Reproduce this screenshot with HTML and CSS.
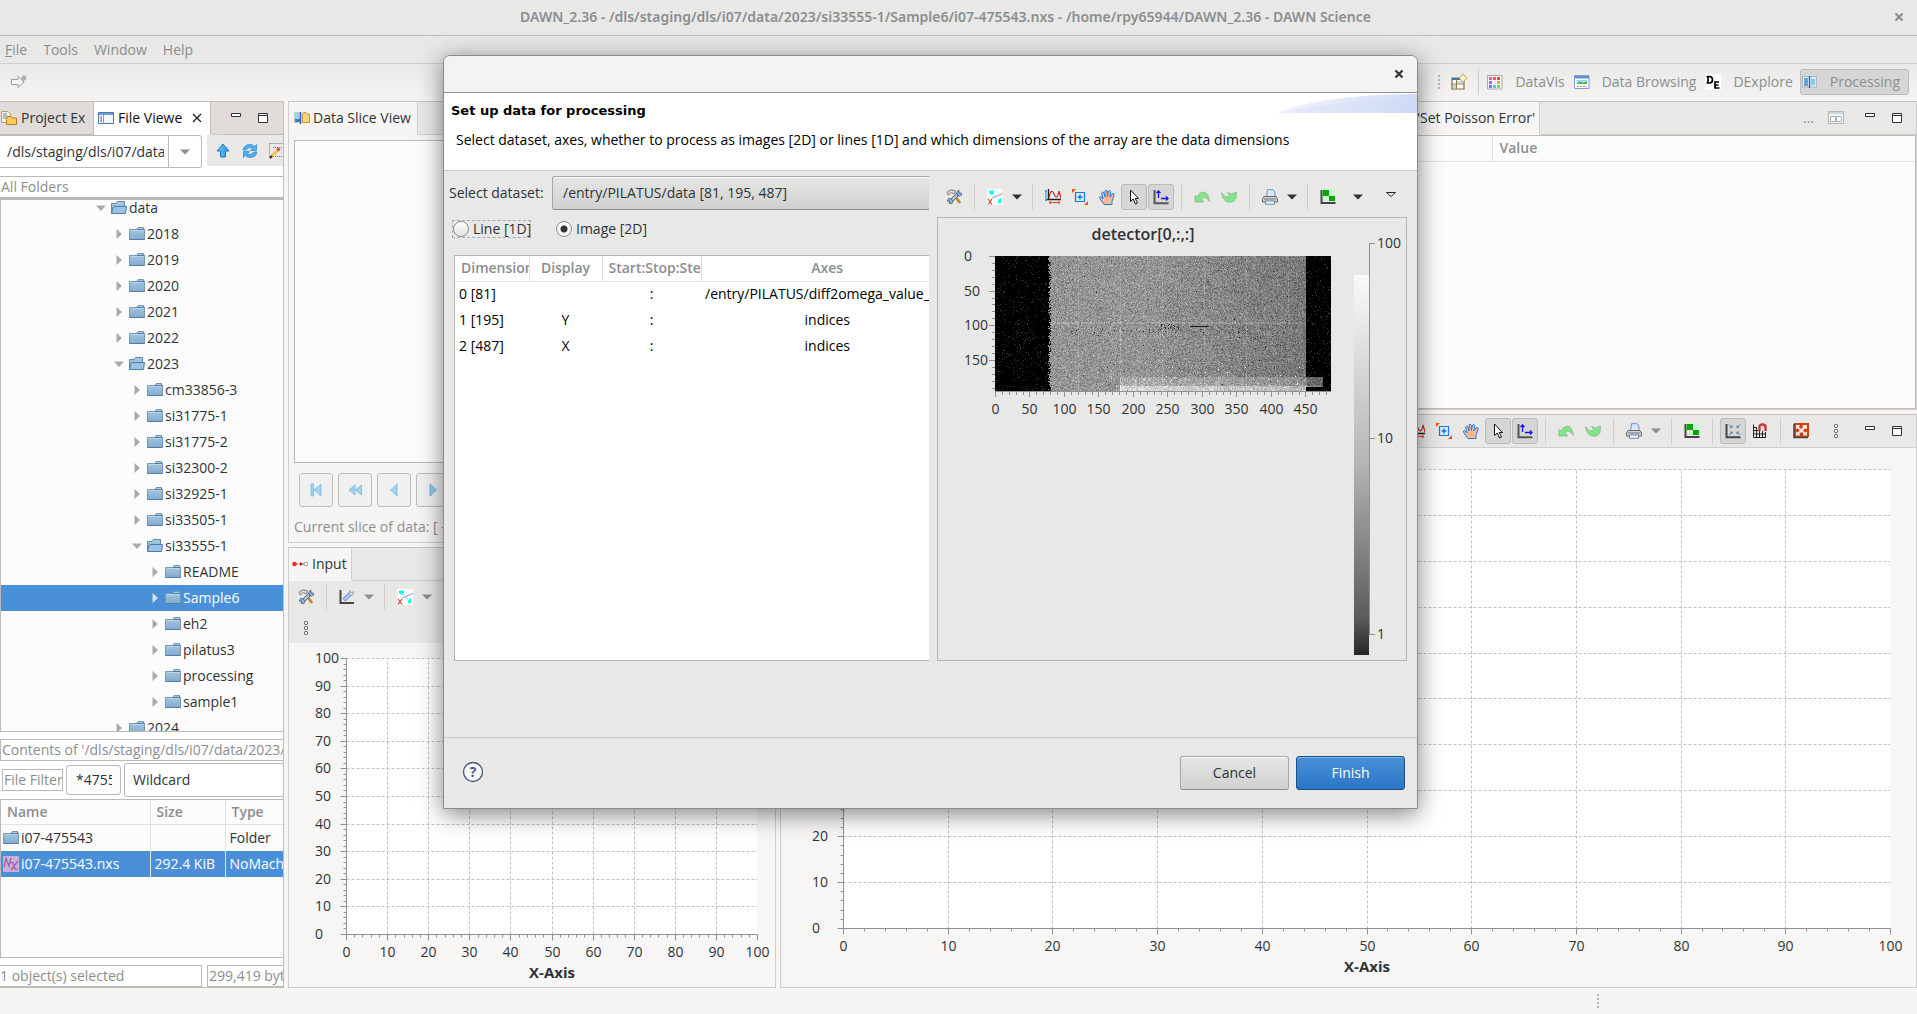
FILE: index.html
```html
<!DOCTYPE html>
<html lang="en">
<head>
<meta charset="utf-8">
<title>DAWN Science</title>
<link rel="stylesheet" href="styles.css">
</head>
<body>
<svg class="sprite" aria-hidden="true">
  <defs>
    <linearGradient id="fold" x1="0" y1="0" x2="0" y2="1"><stop offset="0" stop-color="#a9cbe2"/><stop offset="1" stop-color="#84a9cf"/></linearGradient>
    <linearGradient id="blueArrow" x1="0" y1="0" x2="1" y2="0"><stop offset="0" stop-color="#6fc0f0"/><stop offset="1" stop-color="#2d95e0"/></linearGradient>
    <linearGradient id="swoosh" x1="0" y1="0" x2="1" y2="0"><stop offset="0" stop-color="#f4f6fd"/><stop offset="1" stop-color="#cfdaf4"/></linearGradient>
    <linearGradient id="bar" x1="0" y1="0" x2="0" y2="1"><stop offset="0" stop-color="#fafafa"/><stop offset="0.5" stop-color="#b4b4b4"/><stop offset="0.9" stop-color="#5c5c5c"/><stop offset="1" stop-color="#262626"/></linearGradient>
  </defs>
  <symbol id="folder" viewBox="0 0 16 16"><path d="M.5 3.500H7.500L9 1.500H14.500V3H15.500V13.500H.5Z" fill="url(#fold)" stroke="#7399b3"/><path d="M8 3.500H15M.5 13.500H15.500" stroke="#4f7fa8"/><path d="M1.500 4.500H14.500" stroke="#c4dfee" opacity=".7"/></symbol>
  <symbol id="folder-open" viewBox="0 0 16 16"><path d="M.5 13.500V3.500H5L6.500 1.500H13.500V7" fill="url(#fold)" stroke="#5b8bab"/><path d="M2 7.500L4 6.500H15.500L14.500 13.500H.5Z" fill="#9cc3e4" stroke="#4a80a8"/></symbol>
  <symbol id="nx" viewBox="0 0 16 16"><path d="M0 0H16V16H0Z" fill="#c9b0d6"/><path d="M1 11L3 2.500L6 10L8 2M7.500 7Q10 5 11 10T14.500 13M15 5L8 14" fill="none" stroke="#a35fae" stroke-width="1.300"/></symbol>
  <symbol id="project" viewBox="0 0 16 16"><path d="M.5 1.500H7L9.500 4V12.500H.5Z" fill="#f3f0dc" stroke="#b3a26a"/><path d="M2 4H6M2 6H6M2 8H5" stroke="#5f8cc7"/><path d="M5.500 9.500V8L6.500 6.500H10L11 8H15.500V14.500H5.500Z" fill="#fbcb5c" stroke="#bd7a1c"/></symbol>
  <symbol id="viewer" viewBox="0 0 16 16"><path d="M.5 2.500H15.500V13.500H.5Z" fill="#f2f6fd" stroke="#4377b8"/><path d="M1 3H15V5H1Z" fill="#6e9ddb"/><path d="M5.500 5V13" stroke="#7c9fd0"/><path d="M3 6V12M3 8H4M3 11H4" stroke="#777"/></symbol>
  <symbol id="slice" viewBox="0 0 16 16"><path d="M.5 2.500H6V12.500H.5Z" fill="#9fd0e8" stroke="#b8cfd8"/><path d="M1 9H6V12H1Z" fill="#3f7fb0"/><path d="M6.500 2V14" stroke="#285ce0" stroke-width="1.500"/><path d="M8.500 12.500V4L9.500 2.500H12L13 4H15.500V12.500Z" fill="#fbd678" stroke="#c8922e"/></symbol>
  <symbol id="up" viewBox="0 0 16 16"><path d="M8 1L14 8H10.500V14H5.500V8H2Z" fill="url(#blueArrow)" stroke="#1d78c8"/></symbol>
  <symbol id="refresh" viewBox="0 0 16 16"><path d="M1 7Q2 1.500 8 1.500Q11 1.500 12.500 3.500L14.500 1.500V7.500H8.500L10.500 5.500Q6.500 3 4.500 7ZM15 9Q14 14.500 8 14.500Q5 14.500 3.500 12.500L1.500 14.500V8.500H7.500L5.500 10.500Q9.500 13 11.500 9Z" fill="#4eb0f0" stroke="#2a84cf" stroke-width=".7"/></symbol>
  <symbol id="edit" viewBox="0 0 16 16"><path d="M.5 .5H16M.5 .5V15M4 4.500H16M4 13.500H16" stroke="#777" fill="none" stroke-dasharray="1 1"/><path d="M2 14L10 6" stroke="#e9c64b" stroke-width="3"/><path d="M8.500 7.500L10.500 5.500" stroke="#d44" stroke-width="3"/><path d="M1 15L3 13" stroke="#222" stroke-width="2"/></symbol>
  <symbol id="tools" viewBox="0 0 16 16"><path d="M3 14L11 5" stroke="#e8a33a" stroke-width="3"/><path d="M9 7L14 14" stroke="#c98a2c" stroke-width="3"/><path d="M1 3L5 .7L10 2L8 5L5.500 3.500L2 6Z" fill="#d3d4d2" stroke="#888"/><path d="M4.500 12.500L12 5" stroke="#49719f" stroke-width="3.600"/><path d="M4.500 12.500L12 5" stroke="#b8cfe8" stroke-width="1.800"/><path d="M11 6.500V3L13 1V4H15.500V6L13.500 7ZM5.500 10L2.500 9.500L1 12H3.500V14.500L6 14.500L7 12Z" fill="#8fb2dc" stroke="#44618c" stroke-width=".8"/></symbol>
  <symbol id="axis-wrench" viewBox="0 0 16 16"><path d="M1.500 1V14H15" fill="none" stroke="#444" stroke-width="2"/><path d="M5 11L11 5" stroke="#6f93dc" stroke-width="4"/><path d="M5.500 10.500L11 5" stroke="#bad0fa" stroke-width="2"/><path d="M10 5L11 1.500L12.500 4L14.500 2.500V5.500L12 7Z" fill="#ddd" stroke="#888" stroke-width=".7"/></symbol>
  <symbol id="trace" viewBox="0 0 16 16"><path d="M0 0H16V16H0Z" fill="#fff"/><path d="M3 3L14 13" fill="none" stroke="#7be9ee"/><path d="M5 9L16 4.500" stroke="#9b92dd"/><path d="M2 2L3 1.500H7V4L5 6L2 4ZM11 12L13 9.500L14.500 9V14H11Z" fill="#1ff4f6"/><path d="M1 10L5 15.500M5 10L1 15.500" stroke="#d63a2a" stroke-width="1.200"/></symbol>
  <symbol id="peaks" viewBox="0 0 16 16"><path d="M3 1H15V10H3Z" fill="#d8f4f4"/><path d="M3.500 0V11M2 10.500H16" stroke="#222" stroke-width="1.300"/><path d="M4 9Q6-2 9 5T14 2L16 9" fill="none" stroke="#e02010" stroke-width="1.200"/><path d="M1 1V12M0 2H2M0 11H2" stroke="#2080e0"/><path d="M4 13.500H15M6 12L4 13.500L6 15M13 12L15 13.500L13 15" fill="none" stroke="#e85018"/></symbol>
  <symbol id="zoombox" viewBox="0 0 16 16"><path d="M3.500 3.500H12.500V12.500H3.500Z" fill="#d7ebff" stroke="#1877e0" stroke-width="1.200"/><path d="M8 5.500V10.500M5.500 8H10.500" stroke="#1877e0" stroke-width="1.400"/><path d="M0 0H4L0 4ZM16 16H12L16 12Z" fill="#f25012"/></symbol>
  <symbol id="hand" viewBox="0 0 16 16"><path d="M5 15.500L1 10Q-.5 7.500 1.500 7.500L4 10L2.500 4Q3.500 2 5 4L6 8V2Q7 0 8.300 2V7.500L9.500 2Q11 .5 11.700 2.500L11 8L13.500 4.500Q15.500 4 15 6.500L13 12.500V15.500Z" fill="#fcb98f" stroke="#1c7ce8"/></symbol>
  <symbol id="cursor" viewBox="0 0 16 16"><path d="M4.500 1V12.500L7.200 10L9.500 15L11.500 14L9.200 9.500H12.500Z" fill="#fff" stroke="#111"/></symbol>
  <symbol id="axes" viewBox="0 0 16 16"><path d="M1.500 1V14.200H15.500" fill="none" stroke="#555" stroke-width="2"/><path d="M5.500 9V2M3.500 4L5.500 2L7.500 4M8 9.500H15M13 7.500L15 9.500L13 11.500" fill="none" stroke="#1414e8" stroke-width="1.300"/></symbol>
  <symbol id="undo" viewBox="0 0 16 16"><path d="M1 6.500L3 8Q5.500 3 9.500 3Q14.500 4 15.500 12.500Q13 8 9 8L7.500 9.500L9.500 13H1Z" fill="#84e584" stroke="#86b893" stroke-width=".8"/></symbol>
  <symbol id="redo" viewBox="0 0 16 16"><path d="M15 9.500L12.500 12.500Q10 13.500 6.500 13Q1.500 11 .5 3.500Q3 8 7 8L8.500 6.500L6.500 3.500L10.500 5L15.500 3Z" fill="#84e584" stroke="#86b893" stroke-width=".8"/></symbol>
  <symbol id="print" viewBox="0 0 16 16"><path d="M4.500 8L5.500 .7H11L13 3V8Z" fill="#d8e9fc" stroke="#6b92c4"/><path d="M2 7.500H14L15.500 10V13H.5V10Z" fill="#d5d5d3" stroke="#666"/><path d="M2 10H14" stroke="#777"/><path d="M3.500 12H12.500V15.200H3.500Z" fill="#fff" stroke="#5c85bb"/></symbol>
  <symbol id="checker" viewBox="0 0 16 16"><path d="M2 0H15V12H2Z" fill="#c9f7cd"/><path d="M3 1H9V7H3ZM9 7H15V12H9Z" fill="#07a307"/><path d="M1.500 1V14H15.500" fill="none" stroke="#444" stroke-width="2"/></symbol>
  <symbol id="rescale" viewBox="0 0 16 16"><path d="M1.500 1V14.200H15.500" fill="none" stroke="#444" stroke-width="2"/><path d="M4 1.500L7 4.500V2.500M7 4.500H5M15 1.500L12 4.500V2.500M12 4.500H14M4 12L7 9V11M7 9H5M15 12L12 9V11M12 9H14" fill="none" stroke="#4673a8" stroke-width=".9"/></symbol>
  <symbol id="snap" viewBox="0 0 16 16"><path d="M1.500 1.500V14.500H14M4.500 4V15M7.500 7V15M10.500 8V15M13.500 9V15M1 4.500H5M1 7.500H7M1 11H14" fill="none" stroke="#222"/><path d="M7.500 8V4Q7.500 1.500 10.500 1.500T13.500 4V8" fill="none" stroke="#c33a3a" stroke-width="2.400"/></symbol>
  <symbol id="expand" viewBox="0 0 16 16"><path d="M1 0H16V14H1Z" fill="#cc4310"/><path d="M3 2H7L6 4L8 6L10 4L9.500 2H14V6L12 5.500L10 7.500L12 9.500L14 8.500V12.500H10L10.500 10.500L8.500 9L6.500 10.500L7 12.500H3V8.500L5 9.500L6.500 7.500L5 5.500L3 6Z" fill="#fbe3d8"/><path d="M1 1V14.500H15" fill="none" stroke="#444" stroke-width="1.500"/></symbol>
  <symbol id="dots" viewBox="0 0 16 16"><g fill="#fff" stroke="#666"><circle cx="8" cy="3" r="1.700"/><circle cx="8" cy="8" r="1.700"/><circle cx="8" cy="13" r="1.700"/></g></symbol>
  <symbol id="min" viewBox="0 0 16 16"><path d="M3.500 3.500H12.500V6.500H3.500Z" fill="#fff" stroke="#2e3436"/></symbol>
  <symbol id="max" viewBox="0 0 16 16"><path d="M3.500 3.500H12.500V12.500H3.500ZM3.500 5.500H12.500" fill="#fff" stroke="#2e3436"/></symbol>
  <symbol id="close" viewBox="0 0 16 16"><path d="M4 4L12 12M12 4L4 12" stroke="#222" stroke-width="1.300"/></symbol>
  <symbol id="close-bold" viewBox="0 0 16 16"><path d="M4.500 4.500L11.500 11.500M11.500 4.500L4.500 11.500" stroke="currentColor" stroke-width="2.200"/></symbol>
  <symbol id="input-view" viewBox="0 0 16 16"><path d="M4 8H13" stroke="#a44" stroke-dasharray="2 1"/><circle cx="2.500" cy="8" r="2.300" fill="#d8342c"/><path d="M8 6L11 8L8 10Z" fill="#b22"/><circle cx="14" cy="8" r="1.800" fill="#fff" stroke="#999"/></symbol>
  <symbol id="new" viewBox="0 0 16 16"><path d="M.5 5.500H7V2.500L13 8L7 13.500V10.500H.5Z" fill="#f6f6f5" stroke="#9a9a98"/><path d="M13 1V7M10 4H16M11 2L15 6M15 2L11 6" stroke="#999" stroke-width=".9"/></symbol>
  <symbol id="persp" viewBox="0 0 16 16"><path d="M1 4H13V15H1Z" fill="#fff" stroke="#8a6b3a" stroke-width="1.200"/><path d="M1 4H9V6H1Z" fill="#3e76b5"/><path d="M5.500 6V15M1 10H13" stroke="#8a7a4a"/><path d="M2 11H5V14H2ZM6 7H12V9H6Z" fill="#b9d8ee"/><path d="M12 0L16 4L12 8L8 4Z" fill="#fff4cc" stroke="#caa040"/></symbol>
  <symbol id="datavis" viewBox="0 0 16 16"><path d="M.5 1.500H15V15H.5Z" fill="#fafafa" stroke="#aaa"/><path d="M2 3H5V6H2Z" fill="#ee58b0"/><path d="M6 3H9V6H6Z" fill="#ee5a52"/><path d="M10 3H13V6H10Z" fill="#e8453a"/><path d="M2 7H5V10H2Z" fill="#b165e8"/><path d="M10 7H13V10H10Z" fill="#f5a638"/><path d="M2 11H5V14H2Z" fill="#6c7cf0"/><path d="M6 11H9V14H6Z" fill="#4fc8ee"/><path d="M10 11H13V14H10Z" fill="#6ddb54"/></symbol>
  <symbol id="browse" viewBox="0 0 16 16"><path d="M.5 1.500H15V14.500H.5Z" fill="#fafcff" stroke="#7e9fca"/><path d="M1 2H15V4.500H1Z" fill="#5c93d6"/><path d="M2.500 6H13V10H2.500Z" fill="#9fd4f0"/><path d="M2.500 10L6 7.500L9 9L13 7.500V10Z" fill="#48b83a"/><path d="M3 12.500H13" stroke="#d98a4a" stroke-dasharray="2 1"/></symbol>
  <symbol id="dexp" viewBox="0 0 16 16"><path d="M0 0H16V16H0Z" fill="#fff"/><path d="M3 2.500V9H4.500Q7.500 9 7.500 5.800T4.500 2.500H1.500M1.500 9H4M14 8H10V14H14.500M10 11H13.500" fill="none" stroke="#000" stroke-width="1.700"/></symbol>
  <symbol id="proc" viewBox="0 0 16 16"><path d="M.5 2.500H14.500V13H.5Z" fill="#d3edfa" stroke="#a8b8c4"/><path d="M2 4H6V12H2Z" fill="#65a5cf"/><path d="M9 5H13V11H9Z" fill="#8fc4e8"/><path d="M7.500 2V14" stroke="#2b5bc0" stroke-width="1.300"/></symbol>
  <symbol id="pane" viewBox="0 0 16 16"><path d="M.5 1.500H15.500V13.500H.5Z" fill="#f3f3f3" stroke="#b5b5b5"/><path d="M1 2H15V4H1Z" fill="#d5d5d5"/><path d="M2.500 6.500H7.500V11.500H2.500Z" fill="#fff" stroke="#aaa"/><path d="M8.500 6.500H13.500V11.500H8.500Z" fill="#fff" stroke="#8fc0e0"/></symbol>
  <symbol id="first" viewBox="0 0 16 16"><path d="M3 2H5.500V14H3ZM13 2V14L6 8Z" fill="#9ed4f3" stroke="#7fb5da" stroke-width=".8"/></symbol>
  <symbol id="back" viewBox="0 0 16 16"><path d="M8 3V13L2 8ZM14.500 3V13L8.500 8Z" fill="#9ed4f3" stroke="#7fb5da" stroke-width=".8"/></symbol>
  <symbol id="prev" viewBox="0 0 16 16"><path d="M11 2V14L4.500 8Z" fill="#9ed4f3" stroke="#7fb5da" stroke-width=".8"/></symbol>
  <symbol id="next" viewBox="0 0 16 16"><path d="M5 2V14L11.500 8Z" fill="#8bc8f0" stroke="#6aa8d4" stroke-width=".8"/></symbol>
  <symbol id="caret" viewBox="0 0 16 16"><path d="M3 5.500H13L8 10.500Z" fill="currentColor"/></symbol>
  <symbol id="caret-open" viewBox="0 0 16 16"><path d="M3.500 3.500H12.500L8 7.500Z" fill="#fff" stroke="#222"/></symbol>
  <symbol id="tri" viewBox="0 0 16 16"><path d="M5.500 3L11 8L5.500 13Z" fill="currentColor"/></symbol>
</svg>

<div class="app">
  <header class="titlebar"><h1>DAWN_2.36 - /dls/staging/dls/i07/data/2023/si33555-1/Sample6/i07-475543.nxs - /home/rpy65944/DAWN_2.36 - DAWN Science</h1>
    <button class="plain win-close" aria-label="Close window"><svg class="ic"><use href="#close-bold"/></svg></button></header>
  <nav class="menubar"><a href="#"><u>F</u>ile</a><a href="#">Tools</a><a href="#">Window</a><a href="#">Help</a></nav>
  <div class="coolbar">
    <button class="tool" aria-label="New"><svg class="ic"><use href="#new"/></svg></button>
    <div class="perspectives">
      <span class="grip"></span>
      <button class="tool" aria-label="Open perspective"><svg class="ic"><use href="#persp"/></svg></button>
      <span class="sep"></span>
      <button class="persp"><svg class="ic"><use href="#datavis"/></svg>DataVis</button>
      <button class="persp"><svg class="ic"><use href="#browse"/></svg>Data Browsing</button>
      <button class="persp"><svg class="ic"><use href="#dexp"/></svg>DExplore</button>
      <button class="persp on"><svg class="ic"><use href="#proc"/></svg>Processing</button>
    </div>
  </div>

  <main class="workbench">
    <section class="part files">
      <div class="tabs warm">
        <button class="tab"><svg class="ic"><use href="#project"/></svg>Project Ex</button>
        <button class="tab active"><svg class="ic"><use href="#viewer"/></svg>File Viewe<svg class="ic x"><use href="#close"/></svg></button>
        <span class="winbtns"><button class="tool" aria-label="Minimize"><svg class="ic"><use href="#min"/></svg></button><button class="tool" aria-label="Maximize"><svg class="ic"><use href="#max"/></svg></button></span>
      </div>
      <div class="pathrow">
        <div class="combo"><input type="text" aria-label="Path" value="/dls/staging/dls/i07/data"><button class="plain" aria-label="Show paths"><svg class="ic"><use href="#caret"/></svg></button></div>
        <div class="pathtools"><button class="tool" aria-label="Up"><svg class="ic"><use href="#up"/></svg></button><button class="tool" aria-label="Refresh"><svg class="ic"><use href="#refresh"/></svg></button><button class="tool" aria-label="Edit"><svg class="ic"><use href="#edit"/></svg></button></div>
      </div>
      <div class="boxlabel folders">All Folders</div>
      <ul class="tree" id="tree"></ul>
      <div class="boxlabel contents">Contents of '/dls/staging/dls/i07/data/2023/si</div>
      <div class="filters">
        <label class="boxlabel" for="filter">File Filter</label>
        <input id="filter" type="text" value="*475543*">
        <select aria-label="Filter type"><option>Wildcard</option></select>
      </div>
      <div class="filelist">
        <table>
          <thead><tr><th class="c-name">Name</th><th class="c-size">Size</th><th class="c-type">Type</th></tr></thead>
          <tbody>
            <tr><td><span class="cell"><svg class="ic"><use href="#folder"/></svg>i07-475543</span></td><td></td><td>Folder</td></tr>
            <tr class="sel"><td><span class="cell"><svg class="ic"><use href="#nx"/></svg>i07-475543.nxs</span></td><td>292.4 KiB</td><td>NoMach</td></tr>
          </tbody>
        </table>
      </div>
      <div class="counts"><div class="boxlabel">1 object(s) selected</div><div class="boxlabel">299,419 byt</div></div>
    </section>

    <div class="stack middle">
      <section class="part slice">
        <div class="tabs"><button class="tab active"><svg class="ic"><use href="#slice"/></svg>Data Slice View</button></div>
        <div class="slicebox"></div>
        <div class="nav">
          <button aria-label="First"><svg class="ic"><use href="#first"/></svg></button>
          <button aria-label="Back"><svg class="ic"><use href="#back"/></svg></button>
          <button aria-label="Previous"><svg class="ic"><use href="#prev"/></svg></button>
          <button aria-label="Next"><svg class="ic"><use href="#next"/></svg></button>
        </div>
        <p class="current">Current slice of data: [ - ]</p>
      </section>
      <section class="part input">
        <div class="tabs"><button class="tab active"><svg class="ic"><use href="#input-view"/></svg>Input</button></div>
        <div class="toolbars dim">
          <div class="bar">
            <button class="tool" aria-label="Tools"><svg class="ic"><use href="#tools"/></svg></button><span class="sep"></span>
            <button class="tool" aria-label="Configure"><svg class="ic"><use href="#axis-wrench"/></svg></button><button class="drop" aria-label="More"><svg class="ic"><use href="#caret"/></svg></button><span class="sep"></span>
            <button class="tool" aria-label="Traces"><svg class="ic"><use href="#trace"/></svg></button><button class="drop" aria-label="More"><svg class="ic"><use href="#caret"/></svg></button>
          </div>
          <div class="bar"><button class="tool" aria-label="View menu"><svg class="ic"><use href="#dots"/></svg></button></div>
        </div>
        <div class="plot" id="plot-input"></div>
      </section>
    </div>

    <div class="stack right">
      <section class="part model">
        <div class="tabs"><button class="tab active">Model for 'Set Poisson Error'</button>
          <span class="winbtns"><span class="more">...</span><button class="tool" aria-label="Layout"><svg class="ic"><use href="#pane"/></svg></button><button class="tool" aria-label="Minimize"><svg class="ic"><use href="#min"/></svg></button><button class="tool" aria-label="Maximize"><svg class="ic"><use href="#max"/></svg></button></span></div>
        <div class="modelbox"><table><thead><tr><th class="c-key"></th><th>Value</th></tr></thead></table></div>
      </section>
      <section class="part output">
        <div class="bar dim end">
          <button class="tool" aria-label="Peaks"><svg class="ic"><use href="#peaks"/></svg></button>
          <button class="tool" aria-label="Zoom"><svg class="ic"><use href="#zoombox"/></svg></button>
          <button class="tool" aria-label="Pan"><svg class="ic"><use href="#hand"/></svg></button>
          <button class="tool on" aria-label="Select"><svg class="ic"><use href="#cursor"/></svg></button>
          <button class="tool on" aria-label="Axes"><svg class="ic"><use href="#axes"/></svg></button><span class="sep"></span>
          <button class="tool" aria-label="Undo"><svg class="ic"><use href="#undo"/></svg></button>
          <button class="tool" aria-label="Redo"><svg class="ic"><use href="#redo"/></svg></button><span class="sep"></span>
          <button class="tool" aria-label="Print"><svg class="ic"><use href="#print"/></svg></button><button class="drop" aria-label="More"><svg class="ic"><use href="#caret"/></svg></button><span class="sep"></span>
          <button class="tool" aria-label="Palette"><svg class="ic"><use href="#checker"/></svg></button><span class="sep"></span>
          <button class="tool on" aria-label="Rescale"><svg class="ic"><use href="#rescale"/></svg></button>
          <button class="tool" aria-label="Snap to grid"><svg class="ic"><use href="#snap"/></svg></button><span class="sep"></span>
          <button class="tool" aria-label="Full size"><svg class="ic"><use href="#expand"/></svg></button>
          <span class="winbtns"><button class="tool menu-dots" aria-label="View menu"><svg class="ic"><use href="#dots"/></svg></button><button class="tool" aria-label="Minimize"><svg class="ic"><use href="#min"/></svg></button><button class="tool" aria-label="Maximize"><svg class="ic"><use href="#max"/></svg></button></span>
        </div>
        <div class="plot" id="plot-output"></div>
      </section>
    </div>
  </main>
  <footer class="status"><span class="grip"></span></footer>
</div>

<div class="dialog" role="dialog" aria-labelledby="dlg-title">
  <div class="dlg-bar"><button class="plain" aria-label="Close"><svg class="ic"><use href="#close-bold"/></svg></button></div>
  <div class="dlg-head">
    <h2 id="dlg-title">Set up data for processing</h2>
    <p>Select dataset, axes, whether to process as images [2D] or lines [1D] and which dimensions of the array are the data dimensions</p>
    <svg class="swoosh" viewBox="0 0 140 20" preserveAspectRatio="none"><path d="M0 20Q40 2 140 1V20Z" fill="url(#swoosh)"/><path d="M0 20Q60 7 140 6V20Z" fill="#cfdaf4" opacity=".35"/></svg>
  </div>
  <div class="dlg-body">
    <div class="setup">
      <div class="dataset"><label for="dataset">Select dataset:</label><select id="dataset"><option>/entry/PILATUS/data [81, 195, 487]</option></select></div>
      <div class="radios">
        <label class="focus"><input type="radio" name="kind">Line [1D]</label>
        <label><input type="radio" name="kind" checked>Image [2D]</label>
      </div>
      <div class="dims">
        <table>
          <thead><tr><th class="d1">Dimension</th><th class="d2">Display</th><th class="d3">Start:Stop:Step</th><th class="d4">Axes</th></tr></thead>
          <tbody>
            <tr><td>0 [81]</td><td></td><td>:</td><td class="long">/entry/PILATUS/diff2omega_value_set</td></tr>
            <tr><td>1 [195]</td><td>Y</td><td>:</td><td>indices</td></tr>
            <tr><td>2 [487]</td><td>X</td><td>:</td><td>indices</td></tr>
          </tbody>
        </table>
      </div>
    </div>
    <div class="preview">
      <div class="bar">
        <button class="tool" aria-label="Tools"><svg class="ic"><use href="#tools"/></svg></button><span class="sep"></span>
        <button class="tool" aria-label="Traces"><svg class="ic"><use href="#trace"/></svg></button><button class="drop" aria-label="More"><svg class="ic"><use href="#caret"/></svg></button><span class="sep"></span>
        <button class="tool" aria-label="Peaks"><svg class="ic"><use href="#peaks"/></svg></button>
        <button class="tool" aria-label="Zoom"><svg class="ic"><use href="#zoombox"/></svg></button>
        <button class="tool" aria-label="Pan"><svg class="ic"><use href="#hand"/></svg></button>
        <button class="tool on" aria-label="Select"><svg class="ic"><use href="#cursor"/></svg></button>
        <button class="tool on" aria-label="Axes"><svg class="ic"><use href="#axes"/></svg></button><span class="sep"></span>
        <button class="tool" aria-label="Undo"><svg class="ic"><use href="#undo"/></svg></button>
        <button class="tool" aria-label="Redo"><svg class="ic"><use href="#redo"/></svg></button><span class="sep"></span>
        <button class="tool" aria-label="Print"><svg class="ic"><use href="#print"/></svg></button><button class="drop" aria-label="More"><svg class="ic"><use href="#caret"/></svg></button><span class="sep"></span>
        <button class="tool" aria-label="Palette"><svg class="ic"><use href="#checker"/></svg></button><button class="drop far" aria-label="More"><svg class="ic"><use href="#caret"/></svg></button>
        <button class="drop farther" aria-label="View menu"><svg class="ic"><use href="#caret-open"/></svg></button>
      </div>
      <div class="detector">
        <div class="image">
          <h3>detector[0,:,:]</h3>
          <svg id="det-y" class="det-y"></svg>
          <canvas id="det" width="336" height="135"></canvas>
          <svg id="det-x" class="det-x"></svg>
        </div>
        <svg id="scale" class="scale"></svg>
      </div>
    </div>
  </div>
  <div class="dlg-foot">
    <button class="plain help" aria-label="Help"><svg viewBox="0 0 22 22"><circle cx="11" cy="11" r="9.500" fill="#f4f6fa" stroke="#4d5d7d" stroke-width="1.400"/></svg><span>?</span></button>
    <button class="btn">Cancel</button>
    <button class="btn primary">Finish</button>
  </div>
</div>
<script src="app.js"></script>
</body>
</html>
```
FILE: styles.css
```css
* { box-sizing: border-box; }
body { margin: 0; background: #f6f5f4; color: #2e3436; font: 14px/20px "Open Sans", "Noto Sans", sans-serif; }
button, input, select { font: inherit; color: inherit; margin: 0; }
h1, h2, h3, p, ul { margin: 0; padding: 0; }
table { border-collapse: collapse; table-layout: fixed; }
.sprite { position: absolute; width: 0; height: 0; }
.ic { width: 16px; height: 16px; flex: none; display: block; }
.plain { border: 0; background: none; padding: 0; display: flex; align-items: center; justify-content: center; }

.app { display: flex; flex-direction: column; min-height: 100vh; overflow: hidden; }
.titlebar { display: flex; align-items: center; height: 36px; padding: 0 10px 2px 0; background: #e8e8e7; border-bottom: 1px solid #bcbcba; color: #8b8e8f; }
.titlebar h1 { flex: 1; font-family: "Noto Sans", sans-serif; font-size: 14px; font-weight: 600; text-align: center; }
.menubar { display: flex; gap: 16px; height: 28px; padding: 4px 5px; background: #e8e8e7; border-bottom: 1px solid #cfcfcd; }
.menubar a { color: #8b8e8f; text-decoration: none; }
.coolbar { display: flex; align-items: center; justify-content: space-between; height: 37px; padding: 0 8px 2px 6px; background: linear-gradient(#e9e9e7, #f5f4f3); color: #8b8e8f; }
.perspectives { display: flex; align-items: center; }
.grip { width: 2px; height: 14px; margin-right: 6px; background: repeating-linear-gradient(#b4b4b2 0 2px, transparent 2px 4px); }
.persp { display: flex; align-items: center; gap: 12px; height: 26px; padding: 0 6px 0 1px; border: 1px solid transparent; border-radius: 3px; background: none; }
.persp.on { padding-right: 8px; }
.persp.on, .tool.on { border-color: #bcbcba; background: #d6d6d5; }

.tool { display: flex; align-items: center; justify-content: center; width: 26px; height: 26px; padding: 0; border: 1px solid transparent; border-radius: 3px; background: none; }
.drop { display: flex; justify-content: center; width: 16px; padding: 0; border: 0; background: none; color: #2e3436; }
.drop.far { margin-left: 8px; }
.drop.farther { margin-left: 16px; }
.dim .drop { color: #8b8e8f; }
.sep { width: 1px; height: 26px; margin: 0 6px; background: #cdcdcb; }
.bar { display: flex; align-items: center; gap: 1px; height: 31px; }

.workbench { flex: 1; display: grid; grid-template-columns: 284px 488px minmax(0, 1fr); gap: 4px; }
.stack { display: flex; flex-direction: column; gap: 4px; min-width: 0; }
.part { display: flex; flex-direction: column; min-width: 0; border: 1px solid #d0ceca; border-top-color: #c4c2be; overflow: hidden; }
.slice { flex: 442 1 0; }
.input { flex: 441 1 0; }
.model { flex: 308 1 0; }
.output { flex: 575 1 0; }
.tabs { display: flex; height: 33px; flex: none; background: #e8e8e7; }
.tab { display: flex; align-items: center; gap: 5px; padding: 0 4px; border: 0; border-right: 1px solid #d0ceca; border-bottom: 1px solid #d0ceca; background: none; white-space: nowrap; }
.tab.active { background: #f6f5f4; border-bottom-color: transparent; }
.tabs::after { content: ""; order: 1; flex: 1; border-bottom: 1px solid #d0ceca; }
.winbtns { order: 2; display: flex; align-items: center; gap: 1px; padding-right: 6px; border-bottom: 1px solid #d0ceca; }

.files { background: #fff; border-left: 0; border-color: #c0bcb6; }
.warm { background: #e1dcd9; }
.warm .tab { width: 94px; padding-left: 1px; gap: 4px; border-color: #c0bcb6; }
.warm .tab.active { width: 117px; padding-left: 4px; color: #111; background: #fff; border-bottom-color: #fff; }
.warm .winbtns { padding-right: 7px; border-color: #c0bcb6; }
.warm .x { margin-left: 3px; }
.pathrow { display: flex; gap: 5px; height: 33px; }
.combo { display: flex; width: 202px; height: 33px; border: 1px solid #bbb9b5; border-left: 0; border-radius: 0 3px 3px 0; }
.combo input { flex: 1; min-width: 0; padding: 0 4px 0 7px; border: 0; background: none; outline: 0; }
.combo button { width: 33px; border-left: 1px solid #bbb9b5; color: #8b8e8f; }
.pathtools { display: flex; gap: 1px; height: 31px; flex: 1; align-items: center; padding-left: 3px; background: #e9e8e7; overflow: hidden; }
.pathtools .tool { flex: none; }
.boxlabel { height: 22px; padding-left: 1px; border: 1px solid #bbb9b5; color: #8b8e8f; background: #fff; white-space: nowrap; overflow: hidden; }
.files > .boxlabel { border-right: 0; flex: none; }
.folders { margin-top: 8px; border-left: 0; }
.tree { flex: 534 1 0; min-height: 0; height: 533px; border: 1px solid #bbb9b5; border-width: 2px 0 1px 1px; background: #fcfcfc; list-style: none; overflow: hidden; }
.tree li { display: flex; align-items: center; height: 26px; color: #2e3436; }
.tree li:first-child { margin-top: -5px; }
.tree .arrow { color: #a9a9a8; margin-right: 2px; }
.tree .open .arrow { transform: rotate(90deg); }
.tree .name { margin-left: 2px; }
.tree .sel, .filelist .sel { background: #4a90d9; color: #fff; }
.tree .sel .arrow { color: #d3e4f6; }
.contents { margin-top: 7px; }
.filters { display: flex; align-items: center; gap: 3px; height: 38px; padding-left: 2px; flex: none; }
.filters .boxlabel { width: 61px; flex: none; }
.filters input { width: 55px; height: 30px; flex: none; padding: 0 8px 0 9px; border: 1px solid #bbb9b5; border-radius: 3px; background: #fcfcfc; }
.filters select { width: 190px; height: 34px; flex: none; padding: 0 8px; border: 1px solid #bbb9b5; border-radius: 3px; background: #fff; appearance: none; }
.filelist { flex: 158 1 0; min-height: 0; border: 1px solid #bbb9b5; border-right: 0; background: #fcfcfc; overflow: hidden; }
.filelist table { width: 340px; }
.filelist th { height: 25px; padding: 0 6px; border: 1px solid #e2e2e1; border-width: 0 1px 1px 0; color: #8b8e8f; font-weight: 600; text-align: left; }
.filelist td { height: 26px; padding: 0 4px; border-right: 1px solid #e2e2e1; white-space: nowrap; }
.filelist td:first-child { padding: 0 2px; }
.c-name { width: 149px; }
.c-size { width: 75px; }
.cell { display: flex; align-items: center; gap: 2px; }
.counts { display: grid; grid-template-columns: 202px 1fr; gap: 5px; padding-top: 7px; }
.counts .boxlabel:first-child { border-left: 0; padding-left: 0; }
.counts .boxlabel:last-child { border-right: 0; }

.slicebox { flex: 1; margin: 5px 5px 0; border: 1px solid #bbb9b5; background: #fcfcfc; }
.nav { display: flex; gap: 5px; padding: 10px 10px 0; }
.nav button { display: flex; align-items: center; justify-content: center; width: 34px; height: 34px; padding: 0; border: 1px solid #bdbbb8; border-radius: 3px; background: #f0f0f0; }
.current { padding: 10px 5px 5px; color: #8b8e8f; }
.slice .tab { padding-left: 5px; width: 129px; gap: 3px; }
.input .tab { padding-left: 3px; width: 63px; gap: 4px; }
.toolbars { height: 62px; padding-left: 4px; background: #e9e8e7; }
.plot { flex: 1; min-height: 0; background: #f7f6f5; }
.plot svg { display: block; width: 100%; height: 100%; }
.model .tab { width: 759px; justify-content: flex-end; padding-right: 4px; }
.model .tool:first-of-type { margin-right: 7px; }
.more { padding-right: 8px; color: #8b8e8f; }
.modelbox { flex: 1; border: 1px solid #c0bcb6; border-width: 1px 1px 1px 0; background: #fcfcfc; }
.modelbox table { width: 100%; }
.modelbox th { height: 25px; padding: 0 7px; border-bottom: 1px solid #e2e2e1; color: #8b8e8f; font-weight: 600; text-align: left; }
.modelbox .c-key { width: 711px; border-right: 1px solid #e2e2e1; }
.end { justify-content: flex-end; height: 33px; flex: none; background: #e9e8e7; border-bottom: 1px solid #cfcfcd; }
.end .winbtns { padding-left: 8px; border: 0; }
.menu-dots { margin-right: 7px; }
.status { display: flex; justify-content: flex-end; height: 26px; padding: 6px 312px 0 0; }

.dialog { position: absolute; left: 443px; top: 55px; width: 975px; height: 754px; display: flex; flex-direction: column; border: 1px solid #8a8a88; border-radius: 7px 7px 0 0; background: #e8e8e6; overflow: hidden; box-shadow: 0 5px 24px rgba(0, 0, 0, .5); }
.dlg-bar { display: flex; justify-content: flex-end; height: 37px; padding-right: 10px; background: #f3f3f3; border-bottom: 1px solid #8f8f8d; flex: none; }
.dlg-head { position: relative; height: 78px; padding: 8px 7px; background: #fff; border-bottom: 1px solid #cbcbc9; color: #000; flex: none; }
.dlg-head h2 { font: bold 13px/20px "DejaVu Sans", sans-serif; }
.dlg-head p { padding: 9px 5px; white-space: nowrap; }
.swoosh { position: absolute; right: 0; top: 0; width: 140px; height: 20px; }
.dlg-body { flex: 1; display: flex; gap: 8px; padding: 5px 10px 0 5px; }
.setup { width: 480px; flex: none; overflow: hidden; }
.dataset { display: flex; align-items: center; justify-content: space-between; }
.dataset select { width: 377px; height: 34px; padding: 0 10px; border: 1px solid #a5a5a3; border-right: 0; border-bottom-color: #8d8d8b; border-radius: 3px 0 0 3px; background: linear-gradient(#e6e6e5, #d0d0ce); appearance: none; box-shadow: inset 0 1px #fafafa; }
.radios { display: flex; gap: 24px; padding: 10px 3px 0; }
.radios label { display: flex; align-items: center; gap: 4px; height: 18px; white-space: nowrap; }
.radios .focus { width: 79px; outline: 1px dashed #aaa; outline-offset: -1px; }
.radios input { appearance: none; flex: none; width: 16px; height: 16px; margin: 0 0 0 1px; border: 1px solid #8d8d8b; border-radius: 50%; background: linear-gradient(#fff, #e2e2e1); }
.radios input:checked { background: radial-gradient(#2e3436 0 3px, #f4f4f3 4px); }
.dims { height: 406px; margin: 17px 0 0 5px; border: 1px solid #b5b5b2; border-right: 0; background: #fff; overflow: hidden; }
.dims table { width: 499px; color: #000; }
.dims th { height: 25px; padding: 0 6px; border: 1px solid #e2e2e1; border-width: 0 1px 1px 0; color: #8b8e8f; font-weight: 600; white-space: nowrap; overflow: hidden; }
.dims td { height: 26px; padding: 0 4px; text-align: center; white-space: nowrap; overflow: hidden; }
.dims td:first-child { text-align: left; }
.dims .long { text-align: left; }
.dims .d1 { width: 74px; text-align: left; }
.dims .d2 { width: 73px; }
.dims .d3 { width: 99px; text-align: left; }
.preview { flex: 1; min-width: 0; }
.preview .bar { height: 41px; padding-left: 4px; }
.detector { display: flex; justify-content: space-between; height: 444px; border: 1px solid #b5b5b2; }
.image { display: grid; grid-template: 38px 135px 30px / 57px 336px; }
.image h3 { grid-column: 2; padding: 6px 0; margin-right: 40px; font-size: 16px; font-weight: 600; line-height: 20px; text-align: center; }
.det-y { width: 57px; height: 135px; overflow: visible; }
.det-x { grid-column: 1 / 3; width: 393px; height: 30px; }
.scale { width: 52px; height: 442px; }
.dlg-foot { display: flex; align-items: center; gap: 7px; height: 71px; padding: 0 12px 0 18px; border-top: 1px solid #cbcbc9; flex: none; }
.help { position: relative; width: 22px; height: 22px; margin: 0 auto 3px 0; color: #4d5d7d; font-weight: 700; }
.help svg { position: absolute; inset: 0; }
.help span { position: relative; }
.btn { width: 109px; height: 34px; border: 1px solid #a5a5a3; border-bottom-color: #8d8d8b; border-radius: 3px; background: linear-gradient(#e6e6e5, #d0d0ce); box-shadow: inset 0 1px #fafafa; }
.btn.primary { border-color: #1c5187; background: linear-gradient(#4a90d9, #2a76c6); color: #fff; box-shadow: inset 0 1px #7fb3e8; }
```
FILE: app.js
```javascript
const NS = 'http://www.w3.org/2000/svg';

function add(parent, tag, attrs, text) {
  const e = document.createElementNS(NS, tag);
  for (const k in attrs) e.setAttribute(k, attrs[k]);
  if (text !== undefined) e.textContent = text;
  parent.appendChild(e);
  return e;
}
function line(svg, x1, y1, x2, y2, stroke, dash) {
  const a = { x1, y1, x2, y2, stroke: stroke || '#8f9293' };
  if (dash) a['stroke-dasharray'] = '3 2';
  add(svg, 'line', a);
}
function label(svg, x, y, text, anchor, weight) {
  add(svg, 'text', { x, y: y + 5, 'text-anchor': anchor || 'start', fill: '#2e3436', 'font-weight': weight || 400, 'font-size': weight ? 15 : 14 }, text);
}

// Folder tree
const nodes = [[0, 'data', 1], [1, '2018'], [1, '2019'], [1, '2020'], [1, '2021'], [1, '2022'], [1, '2023', 1],
  [2, 'cm33856-3'], [2, 'si31775-1'], [2, 'si31775-2'], [2, 'si32300-2'], [2, 'si32925-1'], [2, 'si33505-1'],
  [2, 'si33555-1', 1], [3, 'README'], [3, 'Sample6'], [3, 'eh2'], [3, 'pilatus3'], [3, 'processing'], [3, 'sample1'], [1, '2024']];
document.getElementById('tree').innerHTML = nodes.map(([depth, name, open]) =>
  `<li class="${open ? 'open' : ''}${name === 'Sample6' ? 'sel' : ''}" style="padding-left:${92 + depth * 18}px">` +
  `<svg class="ic arrow"><use href="#tri"/></svg><svg class="ic"><use href="#folder${open ? '-open' : ''}"/></svg>` +
  `<span class="name">${name}</span></li>`).join('');

// Empty plots with 0-100 axes
function plot(id, m) {
  const box = document.getElementById(id);
  const W = box.clientWidth, H = box.clientHeight;
  const w = W - m.left - m.right, h = H - m.top - m.bottom;
  const svg = document.createElementNS(NS, 'svg');
  const x0 = m.left + 0.5, y0 = m.top + h + 0.5;
  add(svg, 'rect', { x: m.left, y: m.top, width: w, height: h, fill: '#fff' });
  for (let v = 0; v <= 100; v += 2) {
    const x = Math.round(w * v / 100) + x0, y = y0 - Math.round(h * v / 100);
    const major = v % 10 === 0;
    if (major && v) {
      line(svg, x0, y, x0 + w, y, '#c2c2c2', true);
      if (v < 100) line(svg, x, y0, x, m.top, '#c2c2c2', true);
    }
    line(svg, x, y0, x, y0 + (major ? 6 : 3));
    line(svg, x0, y, x0 - (major ? 6 : 3), y);
    if (major) {
      label(svg, x, y0 + 17, v, 'middle');
      label(svg, m.label, y - 1, v);
    }
  }
  line(svg, x0, m.top, x0, y0);
  line(svg, x0, y0, x0 + w, y0);
  label(svg, x0 + w / 2, y0 + 38, 'X-Axis', 'middle', 700);
  box.appendChild(svg);
}
plot('plot-input', { left: 57, top: 15, right: 18, bottom: 53, label: 26 });
plot('plot-output', { left: 62, top: 21, right: 26, bottom: 59, label: 31 });

// Detector axes
const dy = document.getElementById('det-y'), dx = document.getElementById('det-x');
for (let v = 0; v < 195; v += 10) {
  const y = Math.round(135 * v / 195) + 0.5;
  line(dy, 57, y, v % 50 ? 54 : 51, y);
  if (v % 50 === 0) label(dy, 26, y - 1, v);
}
line(dx, 57, 0.5, 393, 0.5);
for (let v = 0; v < 487; v += 10) {
  const x = Math.round(336 * v / 487) + 57.5;
  line(dx, x, 0, x, v % 50 ? 4 : 6);
  if (v % 50 === 0) label(dx, x, 18, v, 'middle');
}

// Log colour scale
const sc = document.getElementById('scale');
add(sc, 'rect', { x: 0, y: 57, width: 15, height: 380, fill: 'url(#bar)' });
line(sc, 15.5, 25, 15.5, 416);
[['100', 25.5], ['10', 220.5], ['1', 416.5]].forEach(([t, y]) => {
  line(sc, 15, y, 21, y);
  label(sc, 23, y - 1, t);
});

// Detector frame: background, module seams, beam-stop shadow and counting noise
const ctx = document.getElementById('det').getContext('2d');
const img = ctx.createImageData(336, 135);
let seed = 12345;
const rnd = () => {
  seed = (seed + 0x6d2b79f5) | 0;
  let t = Math.imul(seed ^ (seed >>> 15), 1 | seed);
  t = (t + Math.imul(t ^ (t >>> 7), 61 | t)) ^ t;
  return ((t ^ (t >>> 14)) >>> 0) / 4294967296;
};
for (let y = 0; y < 135; y++) {
  for (let x = 0; x < 336; x++) {
    const n = rnd() + rnd() + rnd() - 1.5;
    const edge = 52 + rnd() * 4, strip = x > 124 && x < 328 && y > 120;
    let g;
    if (x < edge || (x > 310 && !(strip && y < 131))) g = rnd() < 0.06 ? 20 + rnd() * 50 : 0;
    else {
      g = 148 - Math.max(0, x - 150) * 0.18 + n * 36;
      if ((x - 41) % 42 === 0) g += 16;
      if (y === 66 || y === 67) g += 16;
      if (strip) g += y > 129 ? 65 : 25;
      if (rnd() < 0.004) g -= 80;
      if (y > 110 && rnd() < 0.004) g = 245;
      if (x > 311) g -= 40;
    }
    if (y === 70 && x > 194 && x < 214) g = 30;
    if (x > 164 && x < 184 && y > 67 && y < 73 && rnd() < 0.25) g = 40;
    if (x > 75 && x < 255 && y > 72 && y < 77 && rnd() < 0.06) g = 45;
    const i = (y * 336 + x) * 4;
    img.data[i] = img.data[i + 1] = img.data[i + 2] = g;
    img.data[i + 3] = 255;
  }
}
ctx.putImageData(img, 0, 0);
```
